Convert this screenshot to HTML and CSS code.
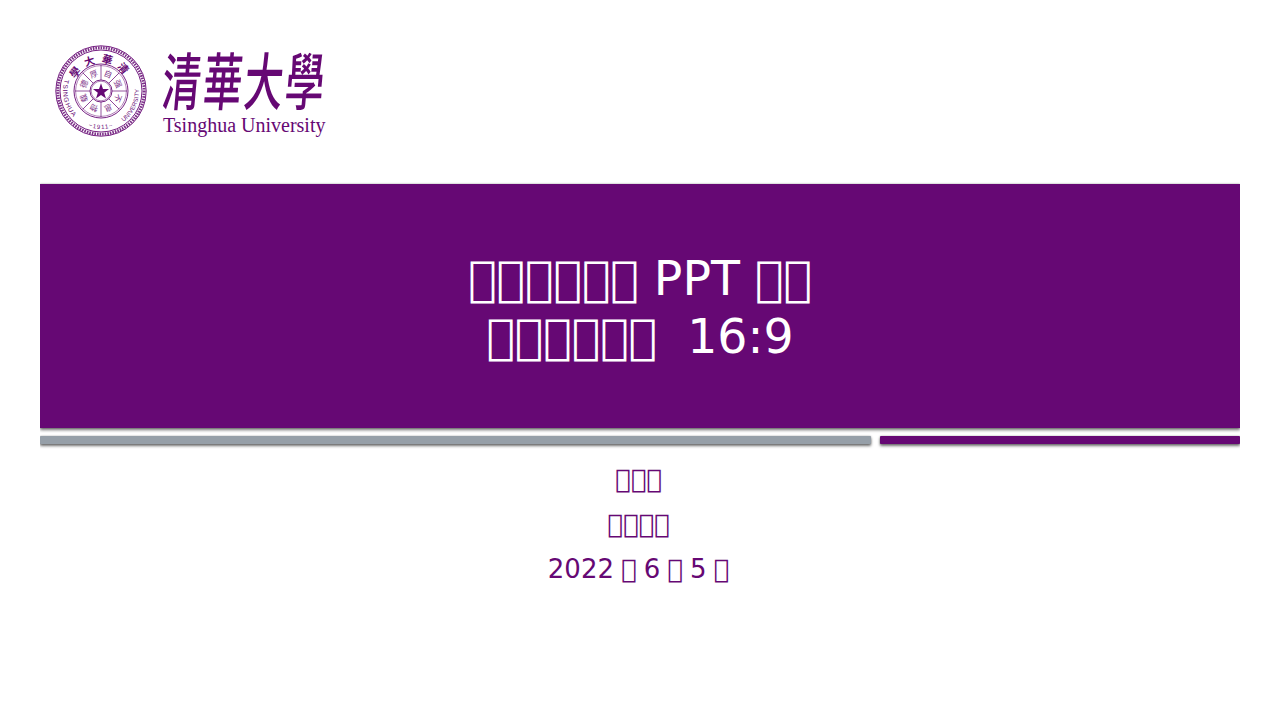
FILE: index.html
```html
<!DOCTYPE html>
<html lang="zh">
<head>
    <meta charset="UTF-8">
    <meta name="viewport" content="width=device-width, initial-scale=1.0">
    <title>Title slide</title>
    <link rel="stylesheet" href="styles.css">
</head>
<body>
    <div class="slide">
        <div class="logo">
            <svg class="seal" viewBox="0 0 92 92" width="92" height="92">
                <defs>
                    <path id="arc-low" d="M46 8 A38 38 0 1 0 46.01 8"/>
                    <path id="arc-top" d="M18 46 A28 28 0 0 1 74 46"/>
                </defs>
                <circle class="line" cx="46" cy="46" r="45.2"/>
                <circle class="rope" cx="46" cy="46" r="43.2"/>
                <circle class="line" cx="46" cy="46" r="41"/>
                <circle class="line" cx="46" cy="46" r="27"/>
                <circle class="line thin" cx="46" cy="46" r="25.4"/>
                <circle class="line" cx="46" cy="46" r="11"/>
                <circle class="line thin" cx="46" cy="46" r="9.8"/>

                <g class="spokes">
                    <line x1="46" y1="20" x2="46" y2="35"/>
                    <line x1="46" y1="20" x2="46" y2="35" transform="rotate(45 46 46)"/>
                    <line x1="46" y1="20" x2="46" y2="35" transform="rotate(90 46 46)"/>
                    <line x1="46" y1="20" x2="46" y2="35" transform="rotate(135 46 46)"/>
                    <line x1="46" y1="20" x2="46" y2="35" transform="rotate(180 46 46)"/>
                    <line x1="46" y1="20" x2="46" y2="35" transform="rotate(225 46 46)"/>
                    <line x1="46" y1="20" x2="46" y2="35" transform="rotate(270 46 46)"/>
                    <line x1="46" y1="20" x2="46" y2="35" transform="rotate(315 46 46)"/>
                </g>

                <g class="ring-text">
                    <text x="46" y="30.5" transform="rotate(22.5 46 46)">自</text>
                    <text x="46" y="30.5" transform="rotate(67.5 46 46)">强</text>
                    <text x="46" y="30.5" transform="rotate(112.5 46 46)">不</text>
                    <text x="46" y="30.5" transform="rotate(157.5 46 46)">息</text>
                    <text x="46" y="30.5" transform="rotate(202.5 46 46)">物</text>
                    <text x="46" y="30.5" transform="rotate(247.5 46 46)">载</text>
                    <text x="46" y="30.5" transform="rotate(292.5 46 46)">德</text>
                    <text x="46" y="30.5" transform="rotate(337.5 46 46)">厚</text>
                </g>

                <text class="seal-name"><textPath href="#arc-top" startOffset="50%">學大華清</textPath></text>
                <text class="seal-latin"><textPath href="#arc-low" startOffset="20%">TSINGHUA</textPath></text>
                <text class="seal-latin tight"><textPath href="#arc-low" startOffset="60%">UNIVERSITY</textPath></text>
                <text class="seal-year"><textPath href="#arc-low" startOffset="50%">~1911~</textPath></text>

                <polygon class="star" points="46,38.2 48,43.9 54,44 49.2,47.7 51,53.5 46,50 41,53.5 42.8,47.7 38,44 44,43.9"/>
            </svg>
            <div class="wordmark">
                <div class="wordmark-cn">清華大學</div>
                <div class="wordmark-en">Tsinghua University</div>
            </div>
        </div>

        <div class="title-panel">
            <h1 class="title">&#xE000;&#xE001;&#xE002;&#xE003;&#xE004;&#xE005; PPT &#xE006;&#xE007;<br>&#xE008;&#xE009;&#xE00A;&#xE00B;&#xE00C;&#xE00D;&nbsp; 16:9</h1>
        </div>

        <div class="bars">
            <div class="bar bar-gray"></div>
            <div class="bar bar-purple"></div>
        </div>

        <div class="subtitle">
            <p class="sub-line">&#xE010;&#xE011;&#xE012;</p>
            <p class="sub-line">&#xE013;&#xE014;&#xE015;&#xE016;</p>
            <p class="sub-line">2022 &#xE017; 6 &#xE018; 5 &#xE019;</p>
        </div>
    </div>
</body>
</html>
```

FILE: styles.css
```css
body {
    margin: 0;
    background-color: #fff;
    font-family: "DejaVu Sans", sans-serif;
}

.slide {
    width: 1200px;
    height: 720px;
    margin: 0 auto;
    overflow: hidden;
}

/* logo */
.logo {
    display: flex;
    align-items: flex-start;
    height: 184px;
    padding: 45px 0 0 15px;
    box-sizing: border-box;
    color: #660874;
}

.seal {
    flex: none;
}

.line {
    fill: none;
    stroke: #660874;
    stroke-width: 0.9;
}

.thin {
    stroke-width: 0.5;
}

.rope {
    fill: none;
    stroke: #7d3189;
    stroke-width: 3;
    stroke-dasharray: 1.6 1;
}

.spokes line {
    stroke: #660874;
    stroke-width: 0.7;
}

.ring-text text {
    fill: #7d3189;
    font-family: "Noto Sans CJK SC", sans-serif;
    font-size: 8px;
    text-anchor: middle;
}

.seal-name {
    fill: #660874;
    font-family: "Noto Sans CJK TC", sans-serif;
    font-size: 10.5px;
    font-weight: 700;
    letter-spacing: 5.5px;
    text-anchor: middle;
}

.seal-latin,
.seal-year {
    fill: #660874;
    font-family: "Liberation Sans", sans-serif;
    font-size: 6.5px;
    letter-spacing: 1px;
}

.tight {
    font-size: 6px;
    letter-spacing: 0.2px;
}

.seal-year {
    font-size: 6px;
    text-anchor: middle;
}

.star {
    fill: #660874;
}

.wordmark {
    margin-left: 16px;
    width: 170px;
}

.wordmark-cn {
    height: 66px;
    margin-bottom: 2px;
    font-family: "Noto Sans CJK TC", sans-serif;
    font-size: 39px;
    font-weight: 500;
    line-height: 66px;
    white-space: nowrap;
    transform: scaleY(1.6) skewX(-8deg);
    transform-origin: left center;
    letter-spacing: 2px;
}

.wordmark-en {
    margin-top: 3px;
    font-family: "Liberation Serif", serif;
    font-size: 20px;
    line-height: 22px;
    white-space: nowrap;
}

/* title block */
.title-panel {
    display: flex;
    justify-content: center;
    align-items: center;
    height: 244px;
    padding-top: 3px;
    box-sizing: border-box;
    background-color: #660874;
    box-shadow: 0 2px 3px rgba(0, 0, 0, 0.55), 0 0 2px rgba(0, 0, 0, 0.3);
}

.title {
    margin: 0;
    color: #fff;
    font-size: 47.4px;
    font-weight: 400;
    line-height: 58px;
    text-align: center;
}

.bars {
    display: flex;
    gap: 9px;
    margin-top: 8px;
}

.bar {
    height: 8px;
    border-radius: 1px;
    box-shadow: 0 2px 3px rgba(0, 0, 0, 0.55), 0 0 2px rgba(0, 0, 0, 0.3);
}

.bar-gray {
    width: 831px;
    background-color: #969fa8;
}

.bar-purple {
    width: 360px;
    background-color: #660874;
}

/* presenter lines */
.subtitle {
    margin-top: 13px;
    padding-right: 3px;
    color: #660874;
    font-size: 26px;
    text-align: center;
}

.sub-line {
    margin: 0;
    line-height: 45px;
    word-spacing: -1.2px;
}
```
